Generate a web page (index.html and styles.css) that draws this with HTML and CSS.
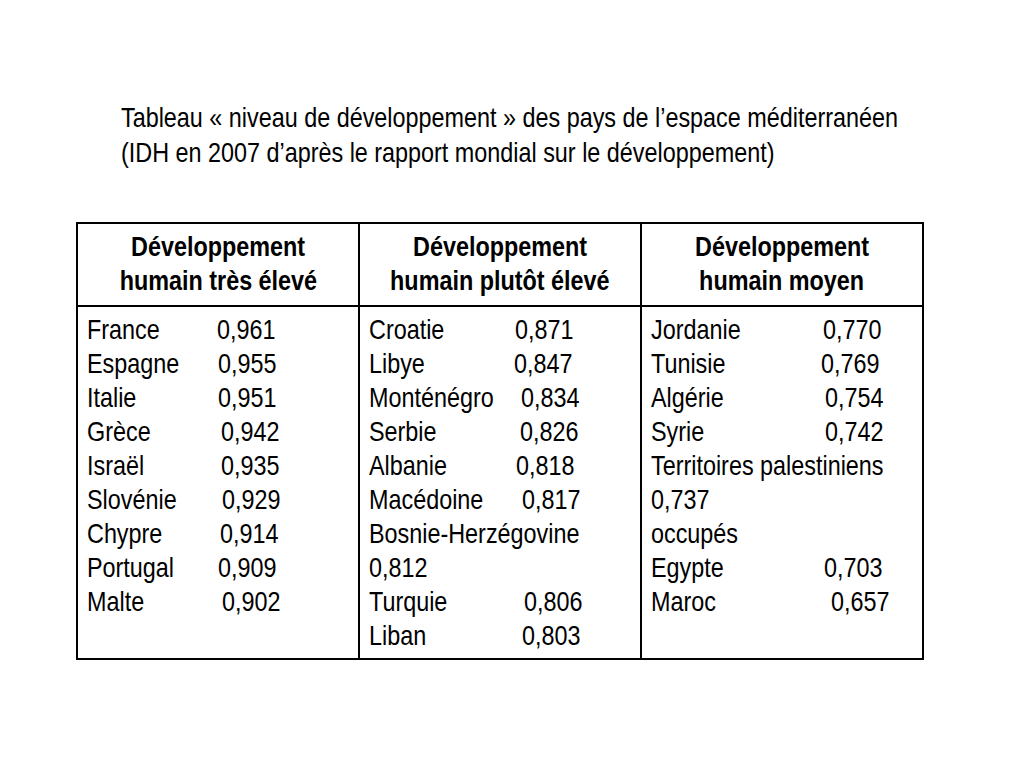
FILE: index.html
```html
<!DOCTYPE html>
<html lang="fr">
<head>
<meta charset="utf-8">
<title>Tableau niveau de développement</title>
<link rel="stylesheet" href="styles.css">
</head>
<body>
<main class="slide">
  <h1 class="title">Tableau « niveau de développement » des pays de l’espace méditerranéen<br>(IDH en 2007 d’après le rapport mondial sur le développement)</h1>
  <table class="idh">
    <thead>
      <tr>
        <th><span class="hd">Développement</span><br><span class="hd">humain très élevé</span></th>
        <th><span class="hd">Développement</span><br><span class="hd">humain plutôt élevé</span></th>
        <th><span class="hd">Développement</span><br><span class="hd">humain moyen</span></th>
      </tr>
    </thead>
    <tbody>
      <tr>
        <td class="c1">
          <div class="row"><span class="name">France</span><span class="val o0">0,961</span></div>
          <div class="row"><span class="name">Espagne</span><span class="val o1">0,955</span></div>
          <div class="row"><span class="name">Italie</span><span class="val o1">0,951</span></div>
          <div class="row"><span class="name">Grèce</span><span class="val o4">0,942</span></div>
          <div class="row"><span class="name">Israël</span><span class="val o4">0,935</span></div>
          <div class="row"><span class="name">Slovénie</span><span class="val o5">0,929</span></div>
          <div class="row"><span class="name">Chypre</span><span class="val o3">0,914</span></div>
          <div class="row"><span class="name">Portugal</span><span class="val o1">0,909</span></div>
          <div class="row"><span class="name">Malte</span><span class="val o5">0,902</span></div>
        </td>
        <td class="c2">
          <div class="row"><span class="name">Croatie</span><span class="val o1">0,871</span></div>
          <div class="row"><span class="name">Libye</span><span class="val o0">0,847</span></div>
          <div class="row"><span class="name">Monténégro</span><span class="val o7">0,834</span></div>
          <div class="row"><span class="name">Serbie</span><span class="val o6">0,826</span></div>
          <div class="row"><span class="name">Albanie</span><span class="val o2">0,818</span></div>
          <div class="row"><span class="name">Macédoine</span><span class="val o8">0,817</span></div>
          <div class="line">Bosnie-Herzégovine</div>
          <div class="line">0,812</div>
          <div class="row"><span class="name">Turquie</span><span class="val o10">0,806</span></div>
          <div class="row"><span class="name">Liban</span><span class="val o8">0,803</span></div>
        </td>
        <td class="c3">
          <div class="row"><span class="name">Jordanie</span><span class="val o2">0,770</span></div>
          <div class="row"><span class="name">Tunisie</span><span class="val o0">0,769</span></div>
          <div class="row"><span class="name">Algérie</span><span class="val o4">0,754</span></div>
          <div class="row"><span class="name">Syrie</span><span class="val o4">0,742</span></div>
          <div class="line">Territoires palestiniens</div>
          <div class="line">0,737</div>
          <div class="line">occupés</div>
          <div class="row"><span class="name">Egypte</span><span class="val o3">0,703</span></div>
          <div class="row"><span class="name">Maroc</span><span class="val o10">0,657</span></div>
        </td>
      </tr>
    </tbody>
  </table>
</main>
</body>
</html>
```

FILE: styles.css
```css
html, body {
  margin: 0;
  padding: 0;
  background: #ffffff;
}

body {
  font-family: "Liberation Sans Narrow", "Arial Narrow", "Liberation Sans", Arial, sans-serif;
  color: #000000;
}

.slide {
  width: 1024px;
  height: 768px;
  box-sizing: border-box;
  padding: 100px 0 0 76px;
  overflow: hidden;
}

/* Narrow-face emulation: Arial Narrow is ~82% the width of Arial */
.title,
.hd,
.name,
.val,
.line {
  transform: scaleX(0.82);
}

.title {
  margin: 0 0 52px 45px;
  font-size: 28.5px;
  font-weight: normal;
  line-height: 35px;
  white-space: nowrap;
  transform-origin: 0 50%;
}

.idh {
  width: 848px;
  border-collapse: collapse;
  table-layout: fixed;
  font-size: 28.5px;
  line-height: 34px;
}

.idh th,
.idh td {
  border: 2px solid #000000;
  width: 33.33%;
}

.idh th {
  font-weight: bold;
  text-align: center;
  padding: 5px 0 8px;
  vertical-align: top;
  white-space: nowrap;
}

.hd {
  display: inline-block;
  transform-origin: 50% 50%;
}

.idh td {
  vertical-align: top;
  text-align: left;
  padding: 5px 0 6px 9px;
}

.row {
  display: flex;
  white-space: nowrap;
}

.line {
  white-space: nowrap;
  transform-origin: 0 50%;
}

.name,
.val {
  flex: none;
  display: block;
  transform-origin: 0 50%;
}

.c1 .name { width: 130px; }
.c2 .name { width: 145px; }
.c3 .name { width: 170px; }

.o0 { margin-left: 0; }
.o1 { margin-left: 1px; }
.o2 { margin-left: 2px; }
.o3 { margin-left: 3px; }
.o4 { margin-left: 4px; }
.o5 { margin-left: 5px; }
.o6 { margin-left: 6px; }
.o7 { margin-left: 7px; }
.o8 { margin-left: 8px; }
.o10 { margin-left: 10px; }
```
